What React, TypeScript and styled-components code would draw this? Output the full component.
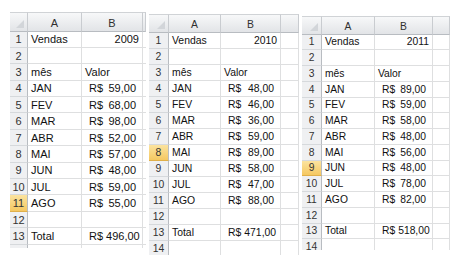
import React from 'react';
import styled, { createGlobalStyle } from 'styled-components';

const GlobalStyle = createGlobalStyle`
  html, body {
    margin: 0;
    padding: 0;
    background: #ffffff;
  }
  body {
    font-family: 'Liberation Sans', Arial, sans-serif;
    color: #111;
  }
`;

const Page = styled.div`
  display: flex;
  align-items: flex-start;
  column-gap: 3px;
  padding-left: 10px;
  width: 454px;
  height: 255px;
  overflow: hidden;
  box-sizing: border-box;
`;

const SheetFrame = styled.div<{ $top: number; $height: number; $font: number }>`
  margin-top: ${p => p.$top}px;
  height: ${p => p.$height}px;
  overflow: hidden;
  font-size: ${p => p.$font}px;
  flex-shrink: 0;
`;

const Grid = styled.div<{ $cols: number[]; $head: number; $row: number }>`
  display: grid;
  grid-template-columns: ${p => p.$cols.map(c => `${c}px`).join(' ')};
  grid-template-rows: ${p => p.$head}px;
  grid-auto-rows: ${p => p.$row}px;
`;

const Cell = styled.div<{ $align?: 'left' | 'right' }>`
  box-sizing: border-box;
  border-right: 1px solid #dedfe0;
  border-bottom: 1px solid #dedfe0;
  display: flex;
  align-items: flex-end;
  justify-content: ${p => (p.$align === 'right' ? 'flex-end' : 'flex-start')};
  padding: 0 3px 1px 3px;
  white-space: nowrap;
  overflow: hidden;
  line-height: 1.15;
`;

const Money = styled(Cell)`
  justify-content: space-between;
  column-gap: 3px;
  padding: 0 6px 1px 7px;
`;

const ColHead = styled.div`
  box-sizing: border-box;
  background: linear-gradient(#f7f8f9, #e2e4e7);
  border-top: 1px solid #d0d3d6;
  border-right: 1px solid #c9ccd0;
  border-bottom: 1px solid #b8bcc1;
  display: flex;
  align-items: center;
  justify-content: center;
  color: #2f2f2f;
  padding-top: 2px;
`;

const Corner = styled(ColHead)`
  position: relative;
  &::after {
    content: '';
    position: absolute;
    right: 3px;
    bottom: 3px;
    border-style: solid;
    border-width: 0 0 8px 8px;
    border-color: transparent transparent #d2d5d9 transparent;
  }
`;

const RowHead = styled.div<{ $active?: boolean }>`
  box-sizing: border-box;
  background: ${p => (p.$active ? 'linear-gradient(#fbe39f, #f5c861)' : '#eff0f2')};
  border-right: 1px solid #b8bcc1;
  border-bottom: 1px solid ${p => (p.$active ? '#e0b04a' : '#d6d9dc')};
  display: flex;
  align-items: flex-end;
  justify-content: center;
  padding-bottom: 1px;
  color: #333;
  line-height: 1.15;
`;

type Year = {
  year: string;
  values: string[];
  total: string;
  active: number;
  top: number;
  height: number;
  font: number;
  cols: number[];
  head: number;
  row: number;
  showRow14: boolean;
};

const months = ['JAN', 'FEV', 'MAR', 'ABR', 'MAI', 'JUN', 'JUL', 'AGO'];

const sheets: Year[] = [
  {
    year: '2009',
    values: ['59,00', '68,00', '98,00', '52,00', '57,00', '48,00', '59,00', '55,00'],
    total: '496,00',
    active: 11,
    top: 12,
    height: 236,
    font: 11,
    cols: [18, 54, 61, 3],
    head: 19.5,
    row: 16.4,
    showRow14: false,
  },
  {
    year: '2010',
    values: ['48,00', '46,00', '36,00', '59,00', '89,00', '58,00', '47,00', '88,00'],
    total: '471,00',
    active: 8,
    top: 14,
    height: 241,
    font: 10.4,
    cols: [20, 52, 60, 18],
    head: 19,
    row: 16,
    showRow14: true,
  },
  {
    year: '2011',
    values: ['89,00', '59,00', '58,00', '48,00', '56,00', '48,00', '78,00', '82,00'],
    total: '518,00',
    active: 9,
    top: 16,
    height: 234,
    font: 10.3,
    cols: [20, 53, 58, 17],
    head: 18.5,
    row: 15.75,
    showRow14: true,
  },
];

const Sheet: React.FC<{ data: Year }> = ({ data }) => {
  const rows: React.ReactNode[] = [];

  const pushRow = (n: number, a: React.ReactNode, b: React.ReactNode, label = true) => {
    rows.push(
      <React.Fragment key={n}>
        <RowHead $active={n === data.active}>{label ? n : null}</RowHead>
        {a}
        {b}
        <Cell />
      </React.Fragment>
    );
  };

  pushRow(1, <Cell>Vendas</Cell>, <Cell $align="right">{data.year}</Cell>);
  pushRow(2, <Cell />, <Cell />);
  pushRow(3, <Cell>mês</Cell>, <Cell>Valor</Cell>);
  months.forEach((m, i) => {
    pushRow(
      4 + i,
      <Cell>{m}</Cell>,
      <Money>
        <span>R$</span>
        <span>{data.values[i]}</span>
      </Money>
    );
  });
  pushRow(12, <Cell />, <Cell />);
  pushRow(
    13,
    <Cell>Total</Cell>,
    <Money>
      <span>R$</span>
      <span>{data.total}</span>
    </Money>
  );
  // row 14 is only a sliver at the bottom edge
  pushRow(14, <Cell />, <Cell />, data.showRow14);

  return (
    <SheetFrame $top={data.top} $height={data.height} $font={data.font}>
      <Grid $cols={data.cols} $head={data.head} $row={data.row}>
        <Corner />
        <ColHead>A</ColHead>
        <ColHead>B</ColHead>
        <ColHead />
        {rows}
      </Grid>
    </SheetFrame>
  );
};

export default function App() {
  return (
    <>
      <GlobalStyle />
      <Page>
        {sheets.map(s => (
          <Sheet key={s.year} data={s} />
        ))}
      </Page>
    </>
  );
}
